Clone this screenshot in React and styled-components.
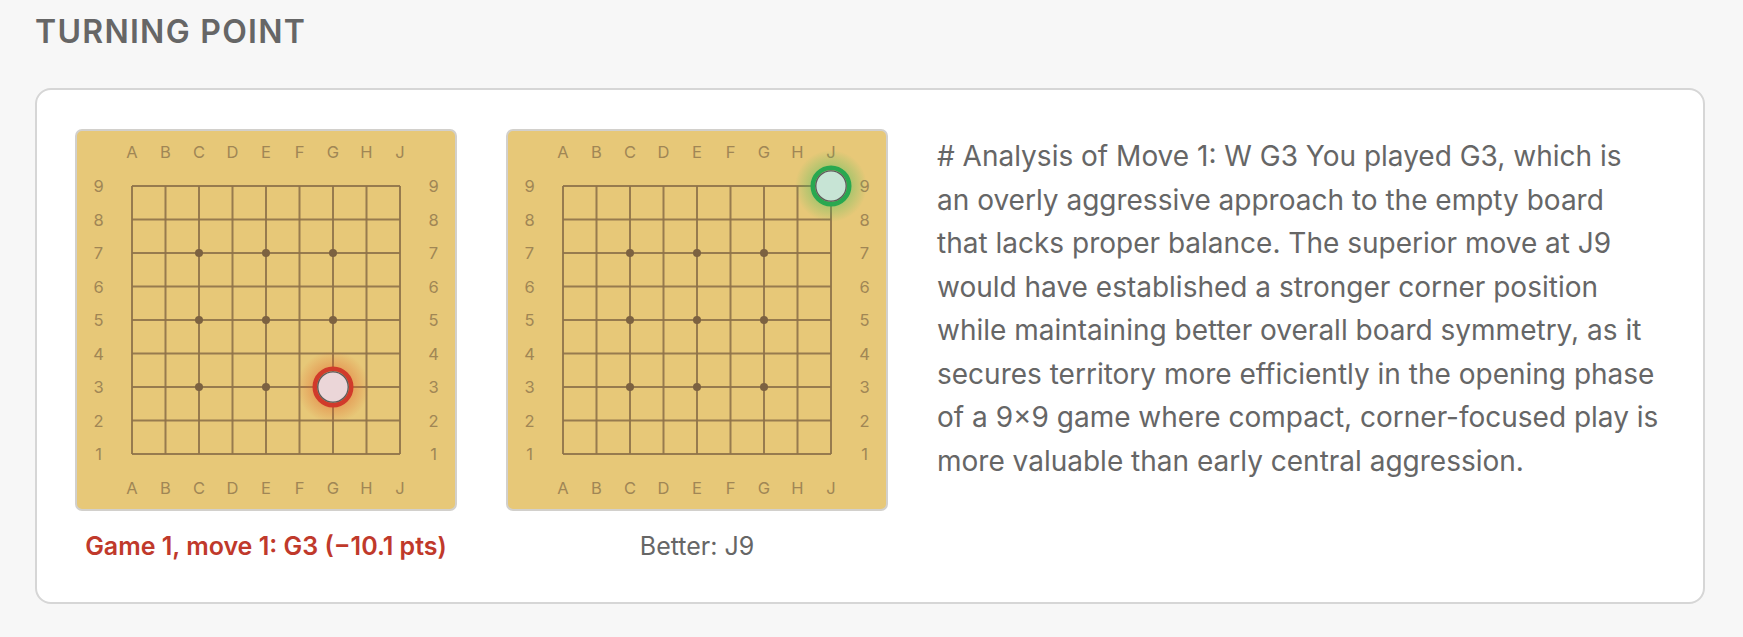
import React from "react";
import styled, { createGlobalStyle } from "styled-components";

const GlobalStyle = createGlobalStyle`
    body {
        margin: 0;
        background: #f7f7f7;
        font-family: Inter, "Noto Sans", sans-serif;
    }
`;

const Page = styled.div`
    padding: 12px 38px 0 35px;
`;

const Title = styled.h2`
    margin: 0 0 36px 0;
    font-size: 32px;
    line-height: 40px;
    font-weight: 600;
    letter-spacing: 0.04em;
    color: #666;
`;

const Card = styled.div`
    display: flex;
    align-items: flex-start;
    gap: 49px;
    background: #fff;
    border: 2px solid #d6d6d6;
    border-radius: 16px;
    padding: 39px 40px 41px 38px;
`;

const BoardColumn = styled.div`
    display: flex;
    flex-direction: column;
    align-items: center;
    gap: 20px;
    flex-shrink: 0;
`;

const BoardFrame = styled.div`
    width: 382px;
    height: 382px;
    box-sizing: border-box;
    background: #e7c878;
    border: 2px solid #d2d0cc;
    border-radius: 7px;
    overflow: hidden;

    & svg {
        display: block;
    }
`;

const Caption = styled.div`
    font-size: 25px;
    line-height: 30px;
    font-weight: ${({ $bad }) => ($bad ? 600 : 400)};
    color: ${({ $bad }) => ($bad ? "#c0392b" : "#666")};
    white-space: nowrap;
`;

const Analysis = styled.p`
    flex: 1;
    margin: 6px 0 0 0;
    font-size: 28px;
    line-height: 43.5px;
    color: #666;
    white-space: nowrap;
`;

const ANALYSIS_LINES = [
    "# Analysis of Move 1: W G3 You played G3, which is",
    "an overly aggressive approach to the empty board",
    "that lacks proper balance. The superior move at J9",
    "would have established a stronger corner position",
    "while maintaining better overall board symmetry, as it",
    "secures territory more efficiently in the opening phase",
    "of a 9×9 game where compact, corner-focused play is",
    "more valuable than early central aggression.",
];

const LETTERS = ["A", "B", "C", "D", "E", "F", "G", "H", "J"];
const STARS = [2, 4, 6];
const START = 55;
const STEP = 33.5;

const STONE_COLORS = {
    bad: { ring: "#d13a2b", fill: "#ebd6d8", glow: "rgba(225, 95, 40, 0.4)" },
    good: { ring: "#28a850", fill: "#c7e4d5", glow: "rgba(70, 190, 90, 0.4)" },
};

// col 0..8 (A..J), row 1..9 (bottom to top)
const pos = (col, row) => ({ x: START + col * STEP, y: START + (9 - row) * STEP });

const Board = ({ stone }) => {
    const end = START + 8 * STEP;
    const colour = STONE_COLORS[stone.kind];
    const s = pos(stone.col, stone.row);
    const gradId = `glow-${stone.kind}`;

    return (
        <BoardFrame>
            <svg width="378" height="378" viewBox="0 0 378 378">
                <defs>
                    <radialGradient id={gradId}>
                        <stop offset="0.5" stopColor={colour.glow} />
                        <stop offset="1" stopColor={colour.glow} stopOpacity="0" />
                    </radialGradient>
                </defs>

                {LETTERS.map((l, i) => (
                    <g key={l} fill="#a08655" fontSize="16.5" fontFamily="Inter, sans-serif" textAnchor="middle">
                        <text x={START + i * STEP} y={26.7}>{l}</text>
                        <text x={START + i * STEP} y={362.7}>{l}</text>
                    </g>
                ))}
                {LETTERS.map((_, i) => (
                    <g key={i} fill="#a08655" fontSize="16.5" fontFamily="Inter, sans-serif" textAnchor="middle">
                        <text x={21.5} y={START + i * STEP + 6}>{9 - i}</text>
                        <text x={356.5} y={START + i * STEP + 6}>{9 - i}</text>
                    </g>
                ))}

                {LETTERS.map((_, i) => (
                    <g key={i} stroke="#8e7249" strokeWidth="2" strokeOpacity="0.9">
                        <line x1={START} y1={START + i * STEP} x2={end} y2={START + i * STEP} />
                        <line x1={START + i * STEP} y1={START} x2={START + i * STEP} y2={end} />
                    </g>
                ))}

                {STARS.map((c) =>
                    STARS.map((r) => (
                        <circle key={`${c}-${r}`} cx={START + c * STEP} cy={START + r * STEP} r="4" fill="#7c6241" />
                    ))
                )}

                <circle cx={s.x} cy={s.y} r="36" fill={`url(#${gradId})`} />
                <circle cx={s.x} cy={s.y} r="18.2" fill="none" stroke={colour.ring} strokeWidth="4.6" />
                <circle cx={s.x} cy={s.y} r="15.2" fill={colour.fill} stroke="#5c5c5c" strokeWidth="1.3" />
            </svg>
        </BoardFrame>
    );
};

export default function App() {
    return (
        <Page>
            <GlobalStyle />
            <Title>TURNING POINT</Title>
            <Card>
                <BoardColumn>
                    <Board stone={{ kind: "bad", col: 6, row: 3 }} />
                    <Caption $bad>Game 1, move 1: G3 (−10.1 pts)</Caption>
                </BoardColumn>
                <BoardColumn>
                    <Board stone={{ kind: "good", col: 8, row: 9 }} />
                    <Caption>Better: J9</Caption>
                </BoardColumn>
                <Analysis>
                    {ANALYSIS_LINES.map((line, i) => (
                        <React.Fragment key={i}>
                            {line}
                            {i < ANALYSIS_LINES.length - 1 && <br />}
                        </React.Fragment>
                    ))}
                </Analysis>
            </Card>
        </Page>
    );
}
